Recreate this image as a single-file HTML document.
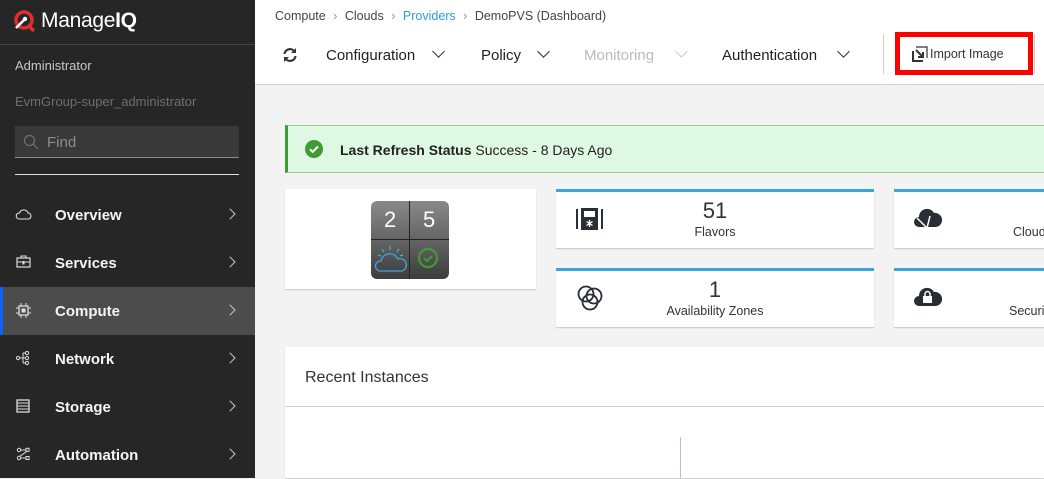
<!DOCTYPE html>
<html><head><style>
*{margin:0;padding:0;box-sizing:border-box}
body{width:1044px;height:478px;overflow:hidden;font-family:"Liberation Sans",sans-serif;background:#f3f3f3;position:relative}
.a{position:absolute}
#sb{left:0;top:0;width:255px;height:478px;background:#262626}
.nav{position:absolute;left:0;width:255px;height:48px;color:#f4f4f4;font-size:15px;font-weight:bold}
.nav span{position:absolute;left:55px;top:16px}
.nav svg{position:absolute}
.chev{position:absolute;left:226px;top:19px;width:8px;height:8px;border-right:1.5px solid #c6c6c6;border-top:1.5px solid #c6c6c6;transform:rotate(45deg)}
.tb{position:absolute;top:47px;font-size:15px;color:#222}
.dd{position:absolute;top:47px;width:9px;height:9px;border-right:1.5px solid #333;border-bottom:1.5px solid #333;transform:rotate(45deg)}
.card{position:absolute;background:#fff;box-shadow:0 1px 1px rgba(0,0,0,.18)}
.kp{border-top:3px solid #39a5dc}
</style></head><body>
<div id="sb" class="a">
  <svg class="a" style="left:13px;top:9px" width="24" height="24" viewBox="0 0 24 24"><circle cx="11" cy="11" r="8" fill="none" stroke="#e02d2d" stroke-width="3.5"/><path d="M16 17l5 5" stroke="#e02d2d" stroke-width="3.5"/><path d="M3 19l8-8" stroke="#fff" stroke-width="2.5"/><circle cx="12" cy="10" r="2.2" fill="#fff"/></svg>
  <div class="a" style="left:41px;top:9px;color:#fff;font-size:21px;letter-spacing:-0.3px">Manage<b>IQ</b></div>
  <div class="a" style="left:0;top:44px;width:255px;height:1px;background:#444"></div>
  <div class="a" style="left:15px;top:58px;color:#c6c6c6;font-size:13px">Administrator</div>
  <div class="a" style="left:15px;top:94px;color:#6f6f6f;font-size:13px">EvmGroup-super_administrator</div>
  <div class="a" style="left:15px;top:126px;width:224px;height:32px;background:#393939;border-bottom:1px solid #8d8d8d"></div>
  <svg class="a" style="left:23px;top:134px" width="16" height="16" viewBox="0 0 16 16"><circle cx="6.5" cy="6.5" r="5" fill="none" stroke="#6f6f6f" stroke-width="1.2"/><path d="M10 10l5 5" stroke="#6f6f6f" stroke-width="1.2"/></svg>
  <div class="a" style="left:47px;top:134px;color:#8d8d8d;font-size:15px">Find</div>
  <div class="a" style="left:15px;top:174px;width:224px;height:1px;background:#e0e0e0"></div>
  <div class="nav" style="top:191px"><svg style="left:15px;top:17px" width="17" height="12" viewBox="0 0 17 12"><path d="M4 11h9a3 3 0 0 0 0-6 4.5 4.5 0 0 0-8.5 0A3 3 0 0 0 4 11z" fill="none" stroke="#ddd" stroke-width="1.1"/></svg><span>Overview</span><i class="chev"></i></div>
  <div class="nav" style="top:239px"><svg style="left:16px;top:16px" width="15" height="13" viewBox="0 0 15 13"><rect x="1" y="3" width="13" height="9" fill="none" stroke="#ddd" stroke-width="1.2"/><path d="M5 3V1h5v2M1 7h13M7 6v3h1V6" fill="none" stroke="#ddd" stroke-width="1.1"/></svg><span>Services</span><i class="chev"></i></div>
  <div class="nav" style="top:287px;background:#4c4c4c"><div class="a" style="left:0;top:0;width:3px;height:48px;background:#0f62fe"></div><svg style="left:16px;top:16px" width="15" height="15" viewBox="0 0 15 15"><rect x="3" y="3" width="9" height="9" fill="none" stroke="#ddd" stroke-width="1.3"/><rect x="5.5" y="5.5" width="4" height="4" fill="#ddd"/><path d="M5 0v3M10 0v3M5 12v3M10 12v3M0 5h3M0 10h3M12 5h3M12 10h3" stroke="#ddd"/></svg><span>Compute</span><i class="chev"></i></div>
  <div class="nav" style="top:335px"><svg style="left:15px;top:15px" width="16" height="16" viewBox="0 0 16 16"><circle cx="3" cy="8" r="1.6" fill="none" stroke="#ddd"/><circle cx="12" cy="3" r="1.6" fill="none" stroke="#ddd"/><circle cx="12" cy="8" r="1.6" fill="none" stroke="#ddd"/><circle cx="12" cy="13" r="1.6" fill="none" stroke="#ddd"/><path d="M4.6 8h5.8M8 3v10M8 3h2.4M8 13h2.4" stroke="#ddd"/></svg><span>Network</span><i class="chev"></i></div>
  <div class="nav" style="top:383px"><svg style="left:16px;top:16px" width="14" height="14" viewBox="0 0 14 14"><rect x="1" y="1" width="12" height="12" fill="none" stroke="#ddd" stroke-width="1.3"/><path d="M1 4h12M1 7h12M1 10h12" stroke="#ddd"/></svg><span>Storage</span><i class="chev"></i></div>
  <div class="nav" style="top:431px"><svg style="left:16px;top:16px" width="14" height="14" viewBox="0 0 14 14"><circle cx="3" cy="3" r="1.7" fill="none" stroke="#ddd"/><rect x="10" y="1.3" width="3" height="3" fill="none" stroke="#ddd"/><circle cx="3" cy="11" r="1.7" fill="none" stroke="#ddd"/><rect x="10" y="9.5" width="3" height="3" fill="none" stroke="#ddd"/><path d="M4.7 3h5.3M11 4.3L3.5 9.5M4.7 11h5.3" stroke="#ddd"/></svg><span>Automation</span><i class="chev"></i></div>
</div>
<div class="a" style="left:255px;top:0;width:789px;height:85px;background:#fff;border-bottom:1px solid #d1d1d1"></div>
<div class="a" style="left:275px;top:9px;font-size:12.5px;color:#444">Compute <span style="color:#999;margin:0 4px">›</span> Clouds <span style="color:#999;margin:0 4px">›</span> <span style="color:#2a9fd6">Providers</span> <span style="color:#999;margin:0 4px">›</span> DemoPVS (Dashboard)</div>
<svg class="a" style="left:282px;top:47px" width="16" height="16" viewBox="0 0 16 16"><path d="M2.5 7A5.5 5.5 0 0 1 12.5 4.5M13.5 9A5.5 5.5 0 0 1 3.5 11.5" fill="none" stroke="#333" stroke-width="2.2"/><path d="M14 1v5h-5zM2 15v-5h5z" fill="#333"/></svg>
<div class="tb" style="left:326px">Configuration</div><i class="dd" style="left:434px"></i>
<div class="tb" style="left:481px">Policy</div><i class="dd" style="left:539px"></i>
<div class="tb" style="left:584px;color:#bbb">Monitoring</div><i class="dd" style="left:677px;border-color:#ccc"></i>
<div class="tb" style="left:722px">Authentication</div><i class="dd" style="left:839px"></i>
<div class="a" style="left:883px;top:34px;width:1px;height:40px;background:#ccc"></div>
<div class="a" style="left:1034px;top:34px;width:1px;height:40px;background:#ccc"></div>
<div class="a" style="left:895px;top:32px;width:138px;height:43px;border:5px solid #f00;background:#fff"></div>
<svg class="a" style="left:912px;top:46px" width="16" height="16" viewBox="0 0 16 16"><path d="M1 5v10h10" fill="none" stroke="#333" stroke-width="2"/><path d="M4 1h11v11" fill="none" stroke="#333" stroke-width="1.2"/><path d="M4 4l7 7M6 11h5V6" fill="none" stroke="#333" stroke-width="2"/></svg>
<div class="a" style="left:930px;top:47px;font-size:12.5px;color:#333">Import Image</div>
<div class="a" style="left:285px;top:125px;width:770px;height:48px;background:#dff8e3;border:1px solid #8fd49a;border-left:3px solid #3f9c35"></div>
<svg class="a" style="left:305px;top:140px" width="18" height="18" viewBox="0 0 18 18"><circle cx="9" cy="9" r="9" fill="#3f9c35"/><path d="M5 9.3l2.7 2.5L13 6.5" fill="none" stroke="#fff" stroke-width="2"/></svg>
<div class="a" style="left:340px;top:142px;font-size:14px;color:#222"><b>Last Refresh Status</b> Success - 8 Days Ago</div>
<div class="card" style="left:285px;top:189px;width:251px;height:100px"></div>
<div class="a" style="left:371px;top:201px;width:78px;height:78px;border-radius:6px;background:linear-gradient(#8a8a8a,#3d3d3d);overflow:hidden">
  <div class="a" style="left:38px;top:0;width:1px;height:78px;background:#222"></div>
  <div class="a" style="left:0;top:38px;width:78px;height:1px;background:#222"></div>
  <div class="a" style="left:13px;top:6px;color:#fff;font-size:22px">2</div>
  <div class="a" style="left:52px;top:6px;color:#fff;font-size:22px">5</div>
  <svg class="a" style="left:3px;top:44px" width="34" height="30" viewBox="0 0 34 30"><path d="M6 26a5 5 0 0 1 1-10 9 9 0 0 1 17-2 6 6 0 0 1 4 12z" fill="none" stroke="#3ea3e0" stroke-width="1.3"/><path d="M16 1v4M8 4l2 3M25 4l-2 3M4 10l3 1M29 10l-3 1" stroke="#3ec6e0" stroke-width="1"/></svg>
  <svg class="a" style="left:46px;top:46px" width="22" height="22" viewBox="0 0 22 22"><circle cx="11" cy="11" r="9" fill="none" stroke="#3f9c35" stroke-width="2.2"/><path d="M7 11l3 3 5-5" fill="none" stroke="#3f9c35" stroke-width="2.2"/></svg>
</div>
<div class="card kp" style="left:556px;top:189px;width:318px;height:59px"></div>
<svg class="a" style="left:576px;top:208px" width="27" height="22" viewBox="0 0 27 22"><rect x="0" y="1" width="2" height="20" fill="#292e34"/><rect x="25" y="1" width="2" height="20" fill="#292e34"/><rect x="5" y="0" width="17" height="22" fill="#292e34"/><rect x="8" y="3" width="11" height="6" fill="#fff"/><path d="M13.5 12v7M10.5 13.5l6 4M16.5 13.5l-6 4" stroke="#fff" stroke-width="1.3"/></svg>
<div class="a" style="left:556px;top:198px;width:318px;text-align:center;font-size:22px;color:#333">51</div>
<div class="a" style="left:556px;top:225px;width:318px;text-align:center;font-size:12.5px;color:#333">Flavors</div>
<div class="card kp" style="left:556px;top:268px;width:318px;height:59px"></div>
<svg class="a" style="left:576px;top:284px" width="28" height="28" viewBox="0 0 28 28"><circle cx="10" cy="10" r="7.5" fill="none" stroke="#292e34" stroke-width="1.8"/><circle cx="18" cy="12" r="7.5" fill="none" stroke="#292e34" stroke-width="1.8"/><circle cx="14" cy="18" r="7.5" fill="none" stroke="#292e34" stroke-width="1.8"/></svg>
<div class="a" style="left:556px;top:277px;width:318px;text-align:center;font-size:22px;color:#333">1</div>
<div class="a" style="left:556px;top:304px;width:318px;text-align:center;font-size:12.5px;color:#333">Availability Zones</div>
<div class="card kp" style="left:894px;top:189px;width:160px;height:59px"></div>
<svg class="a" style="left:913px;top:205px" width="30" height="24" viewBox="0 0 30 24"><path d="M6 22a5 5 0 0 1 0-10 8 8 0 0 1 15-4 6 6 0 0 1 2 14z" fill="#292e34"/><path d="M4 13l10 10M14 23l3-12" stroke="#fff" stroke-width="1.5"/></svg>
<div class="a" style="left:1013px;top:225px;font-size:12.5px;color:#333">Cloud</div>
<div class="card kp" style="left:894px;top:268px;width:160px;height:59px"></div>
<svg class="a" style="left:913px;top:284px" width="30" height="24" viewBox="0 0 30 24"><path d="M6 22a5 5 0 0 1 0-10 8 8 0 0 1 15-4 6 6 0 0 1 2 14z" fill="#292e34"/><rect x="10" y="12" width="9" height="7" fill="#fff"/><path d="M12 12v-2a2.5 2.5 0 0 1 5 0v2" fill="none" stroke="#fff" stroke-width="1.5"/></svg>
<div class="a" style="left:1009px;top:304px;font-size:12.5px;color:#333">Securi</div>
<div class="card" style="left:285px;top:347px;width:759px;height:131px"></div>
<div class="a" style="left:285px;top:406px;width:759px;height:1px;background:#d1d1d1"></div>
<div class="a" style="left:305px;top:369px;font-size:16px;color:#333">Recent Instances</div>
<div class="a" style="left:680px;top:437px;width:1px;height:41px;background:#c9b3e6"></div>
</body></html>
